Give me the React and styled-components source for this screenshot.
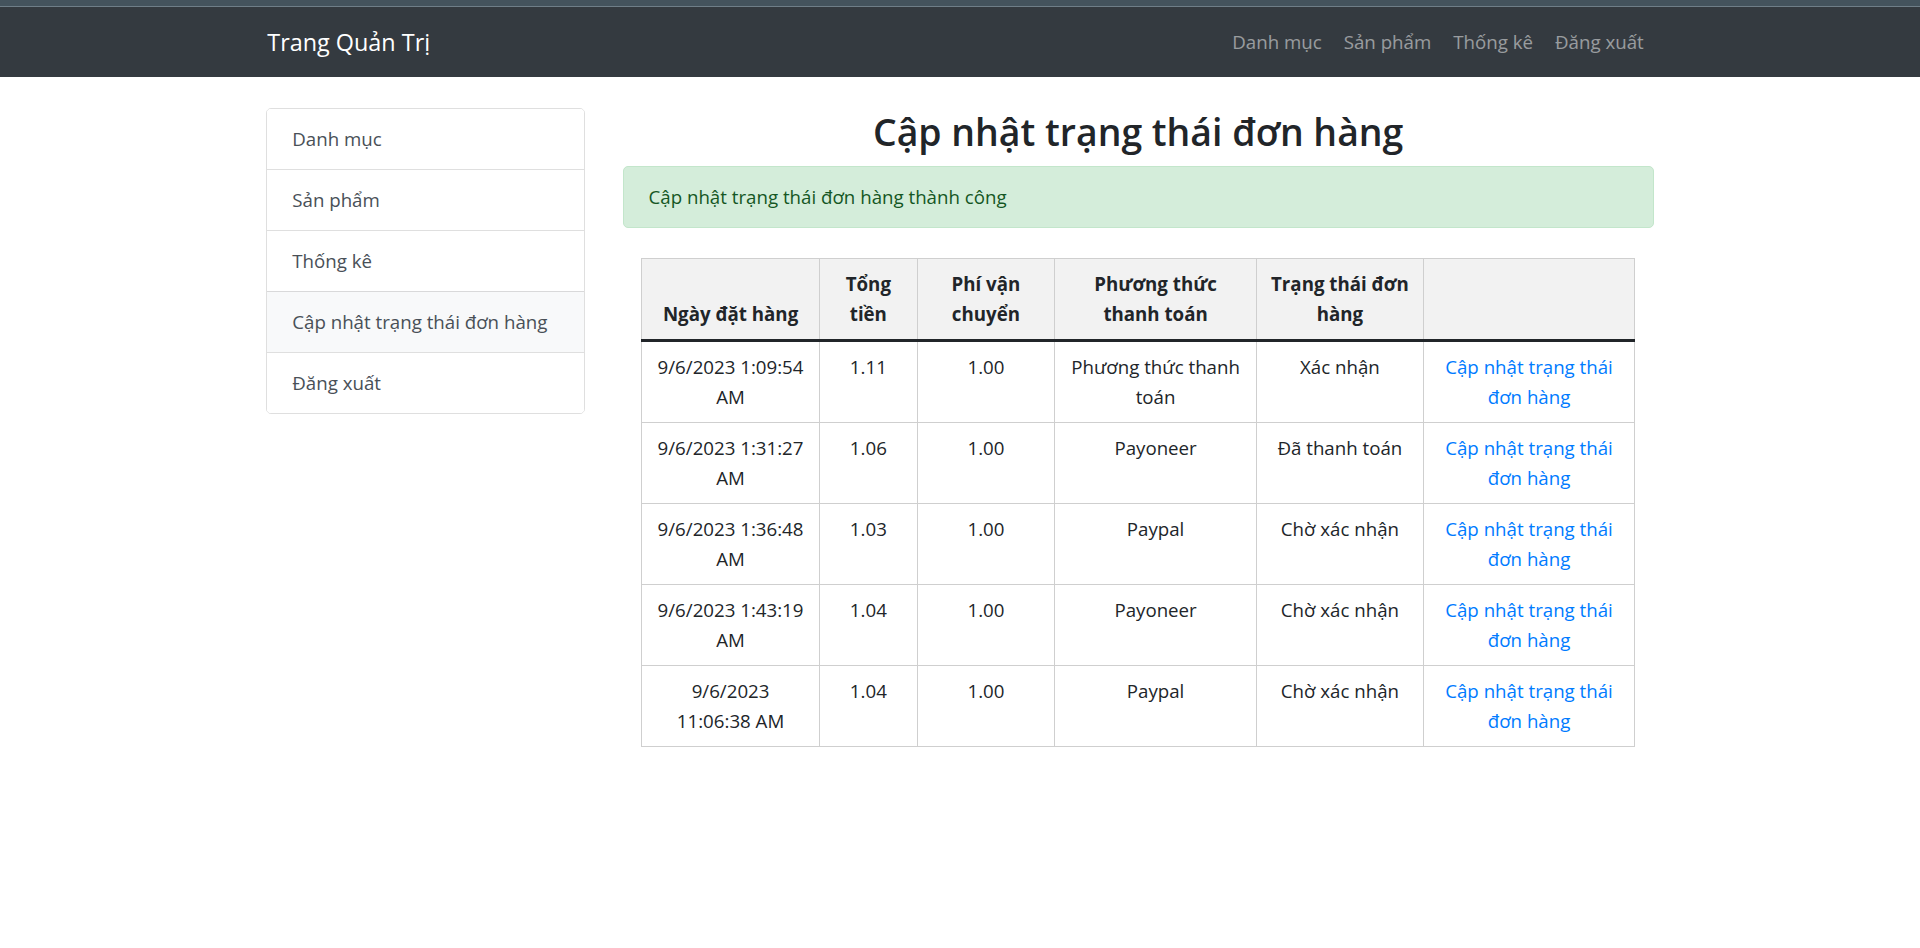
import React from "react";
import styled, { createGlobalStyle } from "styled-components";

const GlobalStyle = createGlobalStyle`
  * { box-sizing: border-box; }
  body {
    margin: 0;
    font-family: "Segoe UI", "Open Sans", "Noto Sans", sans-serif;
    font-size: 18.7px;
    line-height: 30px;
    color: #212529;
    background: #fff;
  }
`;

const TopStrip = styled.div`
  height: 7px;
  background: #44535d;
  border-bottom: 1px solid #6f7e88;
`;

const NavBar = styled.nav`
  background: #343a40;
  height: 70px;
  display: flex;
  align-items: center;
`;

const Container = styled.div`
  width: 100%;
  max-width: 1425px;
  margin: 0 auto;
  padding: 0 18.75px;
`;

const NavInner = styled(Container)`
  display: flex;
  align-items: center;
  justify-content: space-between;
`;

const Brand = styled.a`
  font-size: 23.4px;
  line-height: 37px;
  color: #fff;
  text-decoration: none;
  margin-left: 1px;
`;

const NavLinks = styled.div`
  display: flex;
  margin-right: 10px;
`;

const NavLink = styled.a`
  color: rgba(255, 255, 255, 0.5);
  text-decoration: none;
  padding: 0 11px;
  &:last-child { padding-right: 0; }
`;

const Layout = styled(Container)`
  display: grid;
  grid-template-columns: 318.75px 1fr;
  column-gap: 37.5px;
  margin-top: 31px;
`;

const ListGroup = styled.div`
  display: flex;
  flex-direction: column;
  align-self: start;
  border: 1px solid rgba(0, 0, 0, 0.125);
  border-radius: 5px;
  overflow: hidden;
`;

const ListItem = styled.a`
  display: block;
  padding: 15px 25px;
  line-height: 30px;
  color: #495057;
  text-decoration: none;
  background: ${(p) => (p.$active ? "#f8f9fa" : "#fff")};
  & + & { border-top: 1px solid rgba(0, 0, 0, 0.125); }
`;

const Main = styled.main`
  min-width: 0;
`;

const Title = styled.h2`
  margin: 0 0 10px;
  font-size: 37.4px;
  font-weight: 600;
  line-height: 48px;
  text-align: center;
`;

const Alert = styled.div`
  padding: 15px 25px;
  line-height: 30px;
  color: #155724;
  background: #d4edda;
  border: 1px solid #c3e6cb;
  border-radius: 5px;
  margin-bottom: 20px;
`;

const TableWrap = styled.div`
  padding: 10px 18.75px 0;
`;

const Table = styled.table`
  width: 100%;
  table-layout: fixed;
  border-collapse: collapse;
  text-align: center;
`;

const Col = styled.col`
  width: ${(p) => p.$w}px;
`;

const Th = styled.th`
  padding: 10px;
  line-height: 30px;
  font-weight: 700;
  vertical-align: bottom;
  background: #f2f2f2;
  border: 1px solid #cfcfcf;
  border-bottom: 3px solid #212529;
`;

const Td = styled.td`
  padding: 10px 12px;
  line-height: 30px;
  vertical-align: top;
  border: 1px solid #cfcfcf;
`;

const Link = styled.a`
  color: #007bff;
  text-decoration: none;
`;

const orders = [
  ["9/6/2023 1:09:54 AM", "1.11", "1.00", "Phương thức thanh toán", "Xác nhận"],
  ["9/6/2023 1:31:27 AM", "1.06", "1.00", "Payoneer", "Đã thanh toán"],
  ["9/6/2023 1:36:48 AM", "1.03", "1.00", "Paypal", "Chờ xác nhận"],
  ["9/6/2023 1:43:19 AM", "1.04", "1.00", "Payoneer", "Chờ xác nhận"],
  ["9/6/2023 11:06:38 AM", "1.04", "1.00", "Paypal", "Chờ xác nhận"],
];

const menu = ["Danh mục", "Sản phẩm", "Thống kê", "Cập nhật trạng thái đơn hàng", "Đăng xuất"];

export default function App() {
  return (
    <>
      <GlobalStyle />
      <TopStrip />
      <NavBar>
        <NavInner>
          <Brand href="#">Trang Quản Trị</Brand>
          <NavLinks>
            <NavLink href="#">Danh mục</NavLink>
            <NavLink href="#">Sản phẩm</NavLink>
            <NavLink href="#">Thống kê</NavLink>
            <NavLink href="#">Đăng xuất</NavLink>
          </NavLinks>
        </NavInner>
      </NavBar>
      <Layout>
        <ListGroup>
          {menu.map((m, i) => (
            <ListItem key={m} href="#" $active={i === 3}>
              {m}
            </ListItem>
          ))}
        </ListGroup>
        <Main>
          <Title>Cập nhật trạng thái đơn hàng</Title>
          <Alert>Cập nhật trạng thái đơn hàng thành công</Alert>
          <TableWrap>
            <Table>
              <colgroup>
                <Col $w={177.6} />
                <Col $w={98} />
                <Col $w={137.2} />
                <Col $w={202.1} />
                <Col $w={166.5} />
                <Col $w={211.8} />
              </colgroup>
              <thead>
                <tr>
                  <Th>Ngày đặt hàng</Th>
                  <Th>Tổng tiền</Th>
                  <Th>Phí vận chuyển</Th>
                  <Th>Phương thức thanh toán</Th>
                  <Th>Trạng thái đơn hàng</Th>
                  <Th></Th>
                </tr>
              </thead>
              <tbody>
                {orders.map((o, i) => (
                  <tr key={i}>
                    {o.map((c, j) => (
                      <Td key={j}>{c}</Td>
                    ))}
                    <Td>
                      <Link href="#">Cập nhật trạng thái đơn hàng</Link>
                    </Td>
                  </tr>
                ))}
              </tbody>
            </Table>
          </TableWrap>
        </Main>
      </Layout>
    </>
  );
}
